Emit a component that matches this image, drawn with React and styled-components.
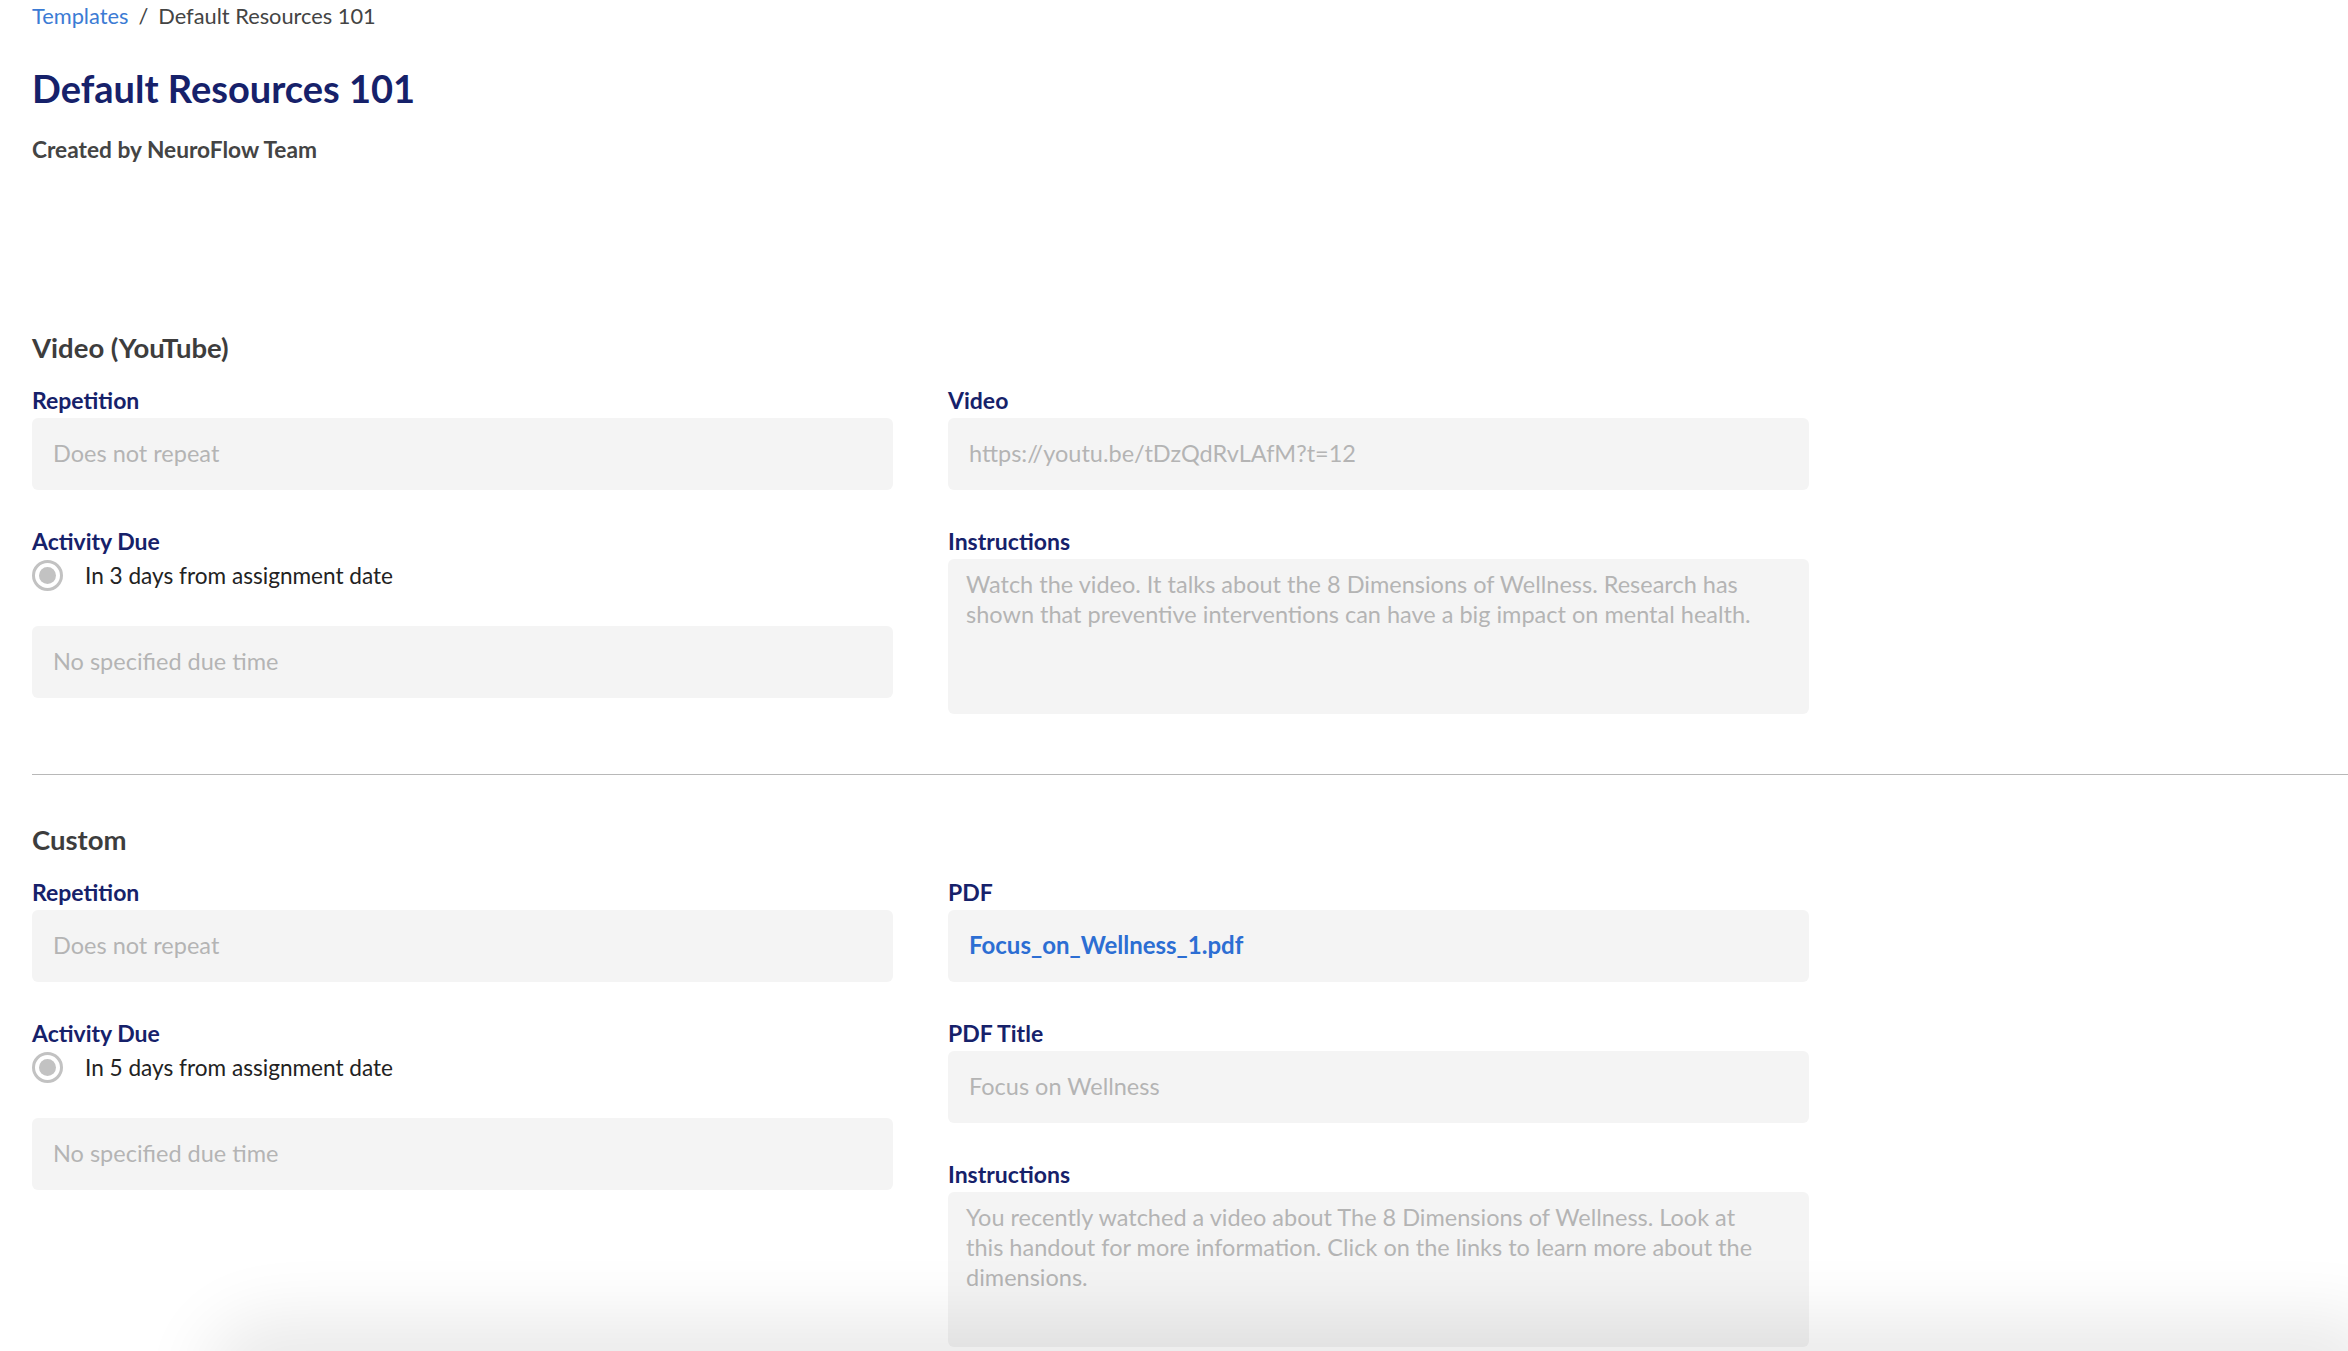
import React from "react";
import styled, { createGlobalStyle } from "styled-components";

const GlobalStyle = createGlobalStyle`
  html, body {
    margin: 0;
    padding: 0;
    background: #ffffff;
  }
  body {
    font-family: "Lato", "Liberation Sans", sans-serif;
    color: #333333;
  }
`;

const Page = styled.div`
  padding: 1px 0 0 32px;
  min-height: 1351px;
  box-sizing: border-box;
`;

const Breadcrumb = styled.nav`
  padding-top: 2px;
  font-size: 21.8px;
  line-height: 25px;
  color: #444444;
`;

const Crumb = styled.a`
  color: #3b7bd4;
  text-decoration: none;
`;

const Slash = styled.span`
  margin: 0 10px;
`;

const Title = styled.h1`
  margin: 38px 0 0;
  font-size: 38px;
  line-height: 44px;
  font-weight: 700;
  color: #16216a;
`;

const Author = styled.p`
  margin: 27px 0 0;
  font-size: 22.7px;
  line-height: 26px;
  font-weight: 700;
  color: #444444;
`;

const Section = styled.section`
  margin-top: ${(p) => p.$top}px;
`;

const SectionTitle = styled.h2`
  margin: 0;
  font-size: 27.5px;
  line-height: 31px;
  font-weight: 700;
  color: #3d3d3d;
`;

const Columns = styled.div`
  display: grid;
  grid-template-columns: 861px 861px;
  column-gap: 55px;
  margin-top: 24px;
  align-items: start;
`;

const Column = styled.div`
  display: flex;
  flex-direction: column;
  gap: 38px;
`;

const Field = styled.div`
  display: flex;
  flex-direction: column;
`;

const Label = styled.label`
  font-size: 23px;
  line-height: 26px;
  font-weight: 700;
  color: #16216a;
  margin-bottom: 5px;
`;

const Box = styled.div`
  box-sizing: border-box;
  height: ${(p) => p.$height || 72}px;
  padding: ${(p) => (p.$multi ? "10px 18px" : "0 21px 2px")};
  display: flex;
  align-items: ${(p) => (p.$multi ? "flex-start" : "center")};
  background: #f4f4f4;
  border-radius: 6px;
  font-size: ${(p) => (p.$link ? 24 : 23.5)}px;
  line-height: 30px;
  color: ${(p) => (p.$link ? "#2c6ed3" : "#b4b4b4")};
  font-weight: ${(p) => (p.$link ? 700 : 400)};
  margin-top: ${(p) => p.$gap || 0}px;
`;

const RadioRow = styled.div`
  display: flex;
  align-items: center;
  gap: 22px;
  height: 31px;
  margin-top: 1px;
  font-size: 22.6px;
  color: #222222;
`;

const RadioCircle = styled.span`
  box-sizing: border-box;
  width: 31px;
  height: 31px;
  border-radius: 50%;
  border: 3.5px solid #c2c2c2;
  display: flex;
  align-items: center;
  justify-content: center;
  flex-shrink: 0;

  &::after {
    content: "";
    width: 17px;
    height: 17px;
    border-radius: 50%;
    background: #c2c2c2;
  }
`;

const Divider = styled.hr`
  margin: 60px 0 0;
  border: 0;
  border-top: 1px solid #b8b8b8;
`;

const BottomShade = styled.div`
  position: fixed;
  left: 230px;
  right: 0;
  bottom: -40px;
  height: 40px;
  box-shadow: 0 -6px 70px 26px rgba(0, 0, 0, 0.09);
  border-radius: 60px 0 0 0;
  pointer-events: none;
`;

const Radio = ({ children }) => (
  <RadioRow>
    <RadioCircle />
    <span>{children}</span>
  </RadioRow>
);

export default function App() {
  return (
    <>
      <GlobalStyle />
      <Page>
        <Breadcrumb>
          <Crumb href="#">Templates</Crumb>
          <Slash>/</Slash>
          <span>Default Resources 101</span>
        </Breadcrumb>
        <Title>Default Resources 101</Title>
        <Author>Created by NeuroFlow Team</Author>

        <Section $top={169}>
          <SectionTitle>Video (YouTube)</SectionTitle>
          <Columns>
            <Column>
              <Field>
                <Label>Repetition</Label>
                <Box>Does not repeat</Box>
              </Field>
              <Field>
                <Label>Activity Due</Label>
                <Radio>In 3 days from assignment date</Radio>
                <Box $gap={35}>No specified due time</Box>
              </Field>
            </Column>
            <Column>
              <Field>
                <Label>Video</Label>
                <Box>https://youtu.be/tDzQdRvLAfM?t=12</Box>
              </Field>
              <Field>
                <Label>Instructions</Label>
                <Box $multi $height={155}>
                  <div>
                    Watch the video. It talks about the 8 Dimensions of Wellness. Research has
                    <br />
                    shown that preventive interventions can have a big impact on mental health.
                  </div>
                </Box>
              </Field>
            </Column>
          </Columns>
        </Section>

        <Divider />

        <Section $top={49}>
          <SectionTitle>Custom</SectionTitle>
          <Columns>
            <Column>
              <Field>
                <Label>Repetition</Label>
                <Box>Does not repeat</Box>
              </Field>
              <Field>
                <Label>Activity Due</Label>
                <Radio>In 5 days from assignment date</Radio>
                <Box $gap={35}>No specified due time</Box>
              </Field>
            </Column>
            <Column>
              <Field>
                <Label>PDF</Label>
                <Box $link>Focus_on_Wellness_1.pdf</Box>
              </Field>
              <Field>
                <Label>PDF Title</Label>
                <Box>Focus on Wellness</Box>
              </Field>
              <Field>
                <Label>Instructions</Label>
                <Box $multi $height={155}>
                  <div>
                    You recently watched a video about The 8 Dimensions of Wellness. Look at
                    <br />
                    this handout for more information. Click on the links to learn more about the
                    <br />
                    dimensions.
                  </div>
                </Box>
              </Field>
            </Column>
          </Columns>
        </Section>
      </Page>
      <BottomShade />
    </>
  );
}
